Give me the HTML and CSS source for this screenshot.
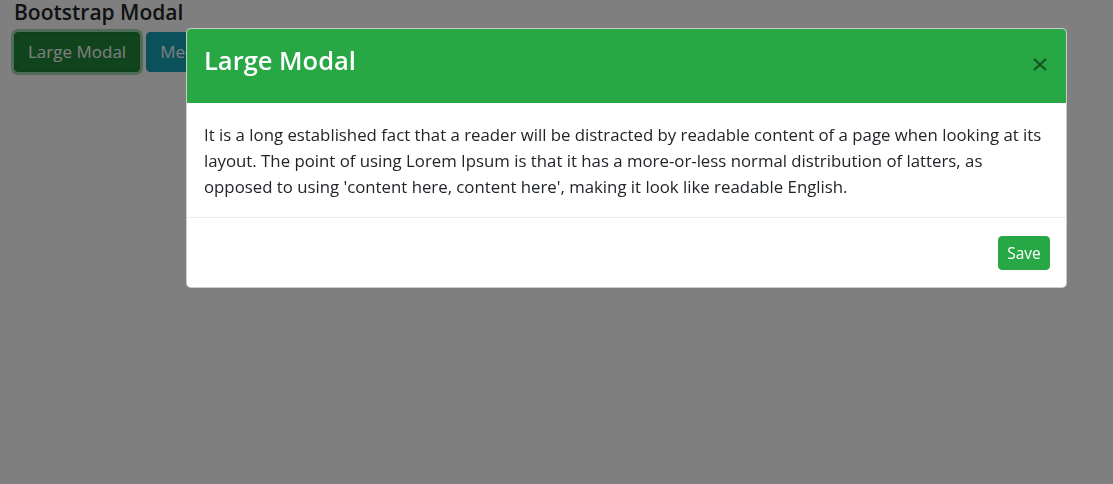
FILE: index.html
```html
<!DOCTYPE html>
<html lang="en">
<head>
<meta charset="utf-8">
<title>Bootstrap Modal</title>
<link rel="stylesheet" href="styles.css">
</head>
<body>
<div class="page">
  <h2 class="page-title">Bootstrap Modal</h2>
  <div class="btn-row">
    <button class="btn btn-success focused">Large Modal</button>
    <button class="btn btn-info">Medium Modal</button>
    <button class="btn btn-warning">Small Modal</button>
  </div>
</div>
<div class="backdrop"></div>
<div class="modal">
  <div class="modal-header">
    <h4 class="modal-title">Large Modal</h4>
    <button class="close" aria-label="Close">
      <svg width="14" height="13" viewBox="0 0 14 13"><path d="M1 1 L13 12 M13 1 L1 12" stroke="currentColor" stroke-width="2.2" fill="none"/></svg>
    </button>
  </div>
  <div class="modal-body">
    <p>It is a long established fact that a reader will be distracted by readable content of a page when looking at its layout. The point of using Lorem Ipsum is that it has a more-or-less normal distribution of latters, as opposed to using 'content here, content here', making it look like readable English.</p>
  </div>
  <div class="modal-footer">
    <button class="btn-save">Save</button>
  </div>
</div>
</body>
</html>
```

FILE: styles.css
```css
* { box-sizing: border-box; }
html, body {
  margin: 0;
  height: 100%;
}
body {
  font-family: "Open Sans", "Noto Sans", sans-serif;
  color: #212529;
  background: #fff;
  overflow: hidden;
}
.page {
  padding: 0 14px;
}
.page-title {
  margin: 0;
  font-size: 21px;
  font-weight: 600;
  line-height: 24px;
}
.btn-row {
  display: flex;
  gap: 6px;
  margin-top: 8px;
}
.btn {
  font-family: inherit;
  font-size: 17px;
  line-height: 24px;
  padding: 7px 13px;
  border: 1px solid transparent;
  border-radius: 4px;
  color: #fff;
  height: 40px;
  white-space: nowrap;
}
.btn-success { background: #28a745; border-color: #28a745; }
.btn-success.focused {
  background: #218838;
  border-color: #1e7e34;
  box-shadow: 0 0 0 3px rgba(72, 180, 97, .5);
}
.btn-info { background: #17a2b8; border-color: #17a2b8; }
.btn-warning { background: #ffc107; border-color: #ffc107; color: #212529; }

.backdrop {
  position: fixed;
  inset: 0;
  background: rgba(0, 0, 0, .5);
}
.modal {
  position: absolute;
  left: 186px;
  top: 28px;
  width: 881px;
  background: #fff;
  border: 1px solid rgba(0, 0, 0, .2);
  border-radius: 5px;
  overflow: hidden;
}
.modal-header {
  background: #28a745;
  height: 74px;
  display: flex;
  align-items: center;
  justify-content: space-between;
  padding: 0 19px 12px 17px;
}
.modal-title {
  margin: 0;
  color: #fff;
  font-size: 25.5px;
  font-weight: 600;
  line-height: 32px;
}
.close {
  display: flex;
  background: none;
  border: 0;
  padding: 0;
  color: #000;
  opacity: .5;
  margin-top: 8px;
}
.modal-body {
  padding: 19px 16px 17px 17px;
  border-bottom: 1px solid #e9ecef;
}
.modal-body p {
  margin: 0;
  font-size: 16.8px;
  line-height: 26px;
}
.modal-footer {
  display: flex;
  justify-content: flex-end;
  padding: 18px 16px 17px;
}
.btn-save {
  font-family: inherit;
  background: #28a745;
  color: #fff;
  border: 1px solid #28a745;
  border-radius: 4px;
  font-size: 15.5px;
  line-height: 22px;
  height: 34px;
  width: 52px;
  padding: 0;
}
```
